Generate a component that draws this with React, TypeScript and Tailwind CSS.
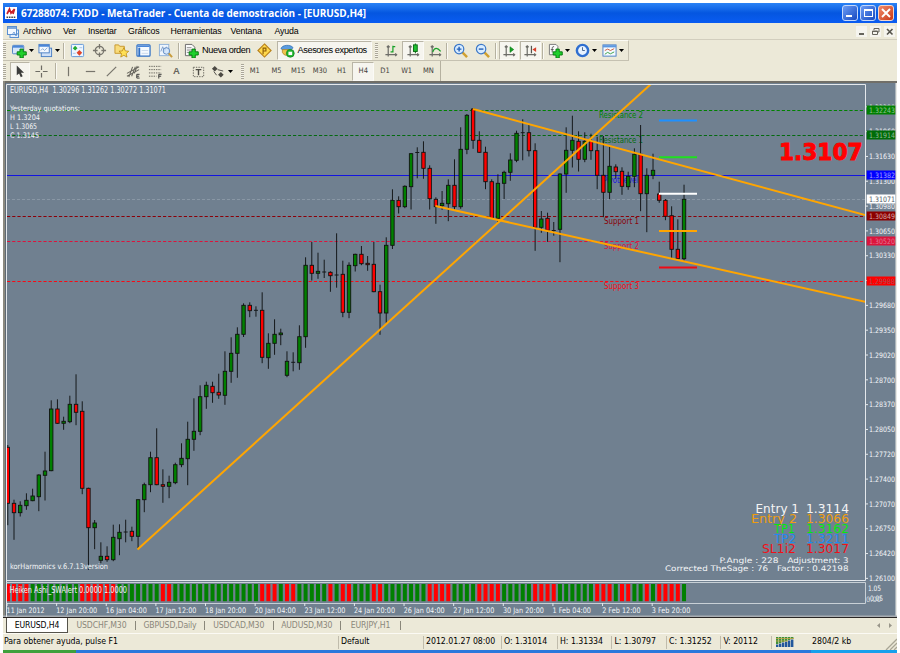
import type { ReactNode } from 'react';
import clsx from 'clsx';

type Dir = 'u' | 'd' | 'n';
// high, body top, body bottom, low, direction
type Candle = [number, number, number, number, Dir];

const CANDLES: Candle[] = [
  [445, 447.3, 503.3, 524.7, 'd'],
  [499.7, 503.3, 512.7, 539.3, 'd'],
  [501.3, 505.3, 512.7, 516, 'u'],
  [493.3, 500.3, 505.7, 509.3, 'u'],
  [488.7, 496, 500.7, 500.7, 'u'],
  [474.3, 475, 496.7, 510.7, 'u'],
  [451.7, 471, 475.3, 500, 'u'],
  [400.3, 409, 470.7, 470.7, 'u'],
  [399.3, 409, 423.3, 423.3, 'd'],
  [416.7, 421.3, 423.3, 429.3, 'u'],
  [395.7, 404.3, 421.7, 422.7, 'u'],
  [374.3, 404.3, 412.3, 424.7, 'd'],
  [401.3, 411.3, 488.3, 493.7, 'd'],
  [487.7, 488.3, 527.7, 569.3, 'd'],
  [520, 523, 527.7, 548.7, 'u'],
  [542.3, 556.3, 560.3, 562.7, 'u'],
  [546.3, 556.3, 559.7, 561.3, 'd'],
  [524.7, 537.3, 559.7, 560.7, 'u'],
  [524.3, 532.3, 538.7, 554.7, 'u'],
  [519.7, 532, 532, 542.3, 'n'],
  [526.7, 531.3, 536.3, 540.7, 'd'],
  [499.7, 499.7, 536.3, 548.3, 'u'],
  [482.7, 484.7, 499.7, 511.7, 'u'],
  [451.7, 457.7, 484.7, 491.7, 'u'],
  [428.3, 457.7, 484.7, 484.7, 'd'],
  [469.3, 484.7, 486.3, 502.3, 'd'],
  [475.7, 482.3, 486.3, 497.7, 'u'],
  [462.7, 464.7, 482.7, 483.7, 'u'],
  [443.3, 458.3, 464.7, 466.7, 'u'],
  [421.7, 439.3, 458.7, 484.7, 'u'],
  [398.3, 431.3, 439.3, 450.3, 'u'],
  [385.3, 396.7, 431.3, 434.7, 'u'],
  [381.7, 385.3, 396.7, 408.3, 'u'],
  [381.7, 386.3, 392.7, 402.3, 'd'],
  [373.7, 392.3, 395, 398.3, 'd'],
  [351.3, 371.3, 395.3, 404.3, 'u'],
  [337.3, 353.3, 371.3, 382.3, 'u'],
  [327.3, 334.3, 353.3, 377.3, 'u'],
  [303.3, 305.3, 334.3, 336.5, 'u'],
  [302.3, 305.3, 310.7, 316.7, 'd'],
  [306.3, 310.3, 310.3, 316.7, 'n'],
  [292.3, 310.3, 357.3, 362.7, 'd'],
  [333.3, 343.3, 357.7, 368.3, 'u'],
  [319.3, 334.3, 343.3, 354.3, 'u'],
  [328.7, 333, 334.7, 344.7, 'u'],
  [351.3, 361.3, 375.3, 376.7, 'u'],
  [352.3, 362.3, 362.3, 371.3, 'n'],
  [325.3, 336.7, 362.7, 369.3, 'u'],
  [257.3, 265.3, 336.7, 347.3, 'u'],
  [242, 265.3, 273.3, 280, 'd'],
  [252.7, 271.3, 273.3, 278.3, 'u'],
  [259.7, 272, 272, 278, 'n'],
  [271.3, 272.3, 275.7, 291.3, 'd'],
  [233.3, 275, 275, 287.7, 'n'],
  [260.7, 274.3, 312.3, 316.7, 'd'],
  [262.3, 265.3, 312.3, 317.7, 'u'],
  [253.7, 254.3, 265.7, 271, 'u'],
  [246, 254.3, 263.7, 264.7, 'd'],
  [256, 263.3, 264.7, 270.3, 'd'],
  [242, 264.3, 291.7, 291.7, 'd'],
  [284.7, 291.7, 313, 334.3, 'd'],
  [237.3, 245.3, 313, 322.3, 'u'],
  [189.3, 200.3, 245.3, 248.5, 'u'],
  [196.3, 200.3, 206.7, 213, 'd'],
  [185.3, 186.3, 206.7, 207.7, 'u'],
  [153.3, 153.7, 186.7, 209, 'u'],
  [147.3, 152.5, 152.5, 178.3, 'n'],
  [141.3, 152.3, 168.3, 178.3, 'd'],
  [165.3, 168.3, 198.7, 209, 'd'],
  [197.3, 199.3, 206.7, 223.3, 'd'],
  [191, 203.3, 205.7, 209.3, 'u'],
  [179.3, 185.3, 203.7, 220.7, 'u'],
  [159.3, 185.3, 206.7, 209.3, 'd'],
  [127.3, 149.3, 206.7, 208.3, 'u'],
  [114, 115.3, 149.3, 153.7, 'u'],
  [108.3, 109, 140.3, 148.3, 'd'],
  [131.3, 140.3, 152.3, 152.3, 'd'],
  [146.7, 152.3, 181.7, 188.7, 'd'],
  [179.3, 181.7, 218.3, 218.3, 'd'],
  [174.3, 183.3, 218.3, 222.3, 'u'],
  [170.7, 172.3, 183.3, 198.7, 'u'],
  [153.3, 160, 172.3, 180.3, 'u'],
  [130.7, 133.3, 160.3, 161.7, 'u'],
  [119.3, 132.7, 132.7, 160.3, 'n'],
  [125, 132.7, 150.7, 156, 'd'],
  [143.3, 150.7, 227.3, 250.3, 'd'],
  [211, 219, 227.3, 232.3, 'u'],
  [212.7, 218.3, 230.3, 241.3, 'd'],
  [222, 230.5, 230.5, 235.7, 'n'],
  [173.3, 174, 229.3, 261.7, 'u'],
  [127.3, 150.3, 174, 192.3, 'u'],
  [115.7, 140.3, 150.3, 167, 'u'],
  [131.3, 141.3, 159.3, 171, 'd'],
  [132.3, 141.3, 159.3, 161.7, 'u'],
  [133.7, 141.3, 150.7, 159.3, 'd'],
  [136.7, 150.7, 175.3, 188.7, 'd'],
  [136, 175.3, 192.3, 216.7, 'd'],
  [146, 166.3, 192.3, 198.7, 'u'],
  [164.3, 167, 171.7, 178, 'd'],
  [167.3, 171.3, 186.3, 194.3, 'd'],
  [171.7, 176.3, 186.7, 189.3, 'u'],
  [148.3, 154.3, 176.3, 186.7, 'u'],
  [125, 154.3, 193.7, 210.7, 'd'],
  [168.3, 175.3, 193.7, 231.7, 'u'],
  [153.7, 170.3, 175.3, 178.7, 'u'],
  [181.7, 194, 200.3, 202.3, 'd'],
  [199, 200.3, 216.3, 219.7, 'd'],
  [206.3, 215.7, 249.3, 258.3, 'd'],
  [219.3, 249.3, 258.7, 259.3, 'd'],
  [184.7, 199.3, 258.7, 260, 'u'],
];

// run lengths, starting with a red run
const HEIKEN_RUNS = [4, 8, 6, 7, 2, 14, 3, 1, 2, 5, 1, 1, 2, 3, 2, 7, 4, 4, 4, 5, 4, 6, 3, 1, 2, 2, 1, 1, 4, 1];
const HEIKEN = HEIKEN_RUNS.flatMap((n, i) => Array<string>(n).fill(i % 2 === 0 ? '#ff0000' : '#008000'));

const PRICES = [
  '1.32290', '1.31960', '1.31630', '1.31300', '1.30980', '1.30650', '1.30330', '1.30000', '1.29680', '1.29350',
  '1.29020', '1.28700', '1.28370', '1.28050', '1.27720', '1.27400', '1.27070', '1.26750', '1.26420', '1.26100',
];

const TIMES = [
  '11 Jan 2012', '12 Jan 20:00', '16 Jan 04:00', '17 Jan 12:00', '18 Jan 20:00', '20 Jan 04:00', '23 Jan 12:00',
  '24 Jan 20:00', '26 Jan 04:00', '27 Jan 12:00', '30 Jan 20:00', '1 Feb 04:00', '2 Feb 12:00', '3 Feb 20:00',
];

const LEVELS = [
  { y: 110.5, color: '#008200', price: '1.32243', tag: '#008000', text: '#8fc08f', label: 'Resistance 2', lx: 599, lw: 44 },
  { y: 135.5, color: '#046a10', price: '1.31914', tag: '#006c08', text: '#8fb894', label: 'Resistance 1', lx: 599, lw: 44 },
  { y: 175.5, color: '#1414e0', price: '1.31382', tag: '#0000ff', text: '#a5a5ff', label: 'Pivot level', lx: 603, lw: 35, solid: true },
  { y: 216.5, color: '#8b0008', price: '1.30849', tag: '#8b0000', text: '#d8a8a8', label: 'Support 1', lx: 604, lw: 35 },
  { y: 241.5, color: '#dc143c', price: '1.30520', tag: '#dc143c', text: '#e07a92', label: 'Support 2', lx: 604, lw: 35 },
  { y: 281.5, color: '#f80a14', price: '1.29988', tag: '#ff0000', text: '#a85058', label: 'Support 3', lx: 604, lw: 35 },
];

const TARGETS = [
  { y: 120.5, color: '#1e90ff' },
  { y: 157.2, color: '#1fe01f' },
  { y: 193.8, color: '#ffffff' },
  { y: 231, color: '#ffa500' },
  { y: 267.6, color: '#f00a14' },
];

const ENTRIES = [
  { label: 'Entry 1', value: '1.3114', x: 755.5, w: 43.5, y: 513, color: '#f5f5f5' },
  { label: 'Entry 2', value: '1.3066', x: 751, w: 46, y: 523, color: '#ee9d10' },
  { label: 'TP1', value: '1.3162', x: 774, w: 21, y: 533, color: '#05e810' },
  { label: 'TP2', value: '1.3211', x: 774, w: 22, y: 543, color: '#2389ee' },
  { label: 'SL1i2', value: '1.3017', x: 762, w: 34, y: 553, color: '#f01018' },
];

interface LabelProps {
  x: number;
  y: number;
  w?: number;
  size?: number;
  fill?: string;
  wide?: boolean;
  bold?: boolean;
  children: string;
}

function Label({ x, y, w, size = 8, fill = '#f4f6f8', wide, bold, children }: LabelProps) {
  return (
    <text
      x={x}
      y={y}
      fontSize={size}
      fill={fill}
      stroke={bold ? fill : undefined}
      strokeWidth={bold ? 0.9 : undefined}
      fontWeight={bold ? 700 : 400}
      textLength={w}
      lengthAdjust="spacingAndGlyphs"
      xmlSpace="preserve"
      className={wide ? "font-['DejaVu_Sans',sans-serif]" : "font-['DejaVu_Sans_Condensed','DejaVu_Sans',sans-serif]"}
    >
      {children}
    </text>
  );
}

function Chart() {
  const cx = (i: number) => 7.8 + i * 6.204;
  return (
    <svg viewBox="3 81 894 537" width="894" height="537" className="block shrink-0">
      <defs>
        <clipPath id="plot">
          <rect x="7" y="85" width="858" height="495" />
        </clipPath>
      </defs>
      <rect x="3" y="81" width="894" height="537" fill="#708090" />
      <rect x="3" y="81" width="894" height="2" fill="#716f68" />
      <rect x="3" y="81" width="2" height="536" fill="#8b8980" />
      <rect x="5" y="83" width="1" height="533" fill="#5f6a74" />
      <rect x="895.5" y="83" width="1.5" height="534" fill="#e8e8e4" />
      <rect x="3" y="615.5" width="894" height="1.5" fill="#a8adb2" />
      <rect x="3" y="617" width="894" height="1" fill="#2a2624" />

      <g stroke="#e4e8ec" strokeWidth="1" fill="none">
        <path d="M6.5 617V84.5H865.5V580.5H6.5" />
        <path d="M6.5 582.5H865.5V603.5H6.5" stroke="#c8d0d6" />
      </g>

      <g clipPath="url(#plot)">
        <path d="M7 199.5H865" stroke="#8997a5" strokeDasharray="3 2" />
        {LEVELS.map((l) => (
          <path key={l.price} d={`M7 ${l.y}H865`} stroke={l.color} strokeWidth="1.1" strokeDasharray={l.solid ? undefined : '3.2 2'} />
        ))}
        {LEVELS.map((l) => (
          <Label key={l.label} x={l.lx} y={l.y + 7.8} w={l.lw} fill={l.color} wide>
            {l.label}
          </Label>
        ))}
        {CANDLES.map(([hi, top, bot, lo, dir], i) => {
          const x = cx(i);
          if (dir === 'n') {
            return <path key={i} d={`M${x} ${hi}V${lo}M${x - 2} ${top}H${x + 2}`} stroke="#15181a" />;
          }
          return (
            <g key={i}>
              <path d={`M${x} ${hi}V${lo + 0.5}`} stroke="#15181a" />
              <rect
                x={x - 1.7}
                y={top}
                width="3.4"
                height={Math.max(bot - top, 1)}
                fill={dir === 'u' ? '#008000' : '#ff0000'}
                stroke="#10120f"
                strokeWidth="0.9"
              />
            </g>
          );
        })}
        {TARGETS.map((t) => (
          <path key={t.y} d={`M659 ${t.y}H697`} stroke={t.color} strokeWidth="2" />
        ))}
        <g stroke="#ffa500" strokeWidth="2">
          <path d="M137.5 549.5L651 84" />
          <path d="M473 109L866 215.3" />
          <path d="M435.5 206L866 302" />
        </g>
      </g>

      <Label x={10} y={93.2} w={156}>EURUSD,H4  1.30296 1.31262 1.30272 1.31071</Label>
      <Label x={10} y={110.5} w={70} size={7.6} wide>Yesterday quotations:</Label>
      <Label x={10} y={120} w={30} size={7.6} wide>H 1.3204</Label>
      <Label x={10} y={129} w={27} size={7.6} wide>L 1.3065</Label>
      <Label x={10} y={138} w={29} size={7.6} wide>C 1.3145</Label>
      <Label x={10} y={569} w={98} size={7.6} wide>korHarmonics v.6.7.13version</Label>
      <Label x={779} y={160} w={83.5} size={23} fill="#ff0000" bold wide>1.3107</Label>

      {ENTRIES.map((e) => (
        <g key={e.label}>
          <Label x={e.x} y={e.y} w={e.w} size={13} fill={e.color} wide>{e.label}</Label>
          <Label x={806} y={e.y} w={43} size={13} fill={e.color} wide>{e.value}</Label>
        </g>
      ))}
      <Label x={719.5} y={563} w={59} size={7.6} wide>P.Angle : 228</Label>
      <Label x={787.5} y={563} w={61} size={7.6} wide>Adjustment: 3</Label>
      <Label x={665} y={571} w={103} size={7.6} wide>Corrected TheSage : 76</Label>
      <Label x={777} y={571} w={71.5} size={7.6} wide>Factor : 0.42198</Label>

      {PRICES.map((p, i) => {
        const y = 106.8 + i * 24.82;
        return (
          <g key={p}>
            <path d={`M865 ${y}H868`} stroke="#e4e8ec" />
            <Label x={869} y={y + 2.7} w={26} size={7.4}>{p}</Label>
          </g>
        );
      })}
      {LEVELS.map((l) => (
        <g key={l.price}>
          <rect x="866.7" y={l.y - 5} width="28.6" height="9" fill={l.tag} />
          <Label x={869} y={l.y + 2.2} w={26} size={7.4} fill={l.text}>{l.price}</Label>
        </g>
      ))}
      <rect x="866.7" y="194.5" width="28.6" height="9" fill="#ffffff" />
      <Label x={869} y={201.8} w={26} size={7.4} fill="#555d66">1.31071</Label>

      {HEIKEN.map((c, i) => (
        <rect key={i} x={Math.max(7, cx(i) - 2)} y="584" width={i === 0 ? 3 : 4} height="17.2" fill={c} />
      ))}
      <Label x={9.5} y={592.8} w={117.5}>Heiken Ashi_SWAlert 0.0000 1.0000</Label>
      <Label x={868} y={590.5} w={13} size={7.4}>1.05</Label>
      <Label x={868} y={600.6} w={15} size={7.4}>-0.05</Label>
      <Label x={866} y={602} w={15} size={7.4} fill="#d5dbe0">0.00</Label>
      {TIMES.map((t, i) => (
        <g key={t}>
          <path d={`M${7 + i * 49.63} 603V606`} stroke="#e4e8ec" />
          <Label x={6.6 + i * 49.63} y={613} w={i === 0 ? 38 : i > 10 ? 38.5 : 41} size={7.6}>{t}</Label>
        </g>
      ))}
    </svg>
  );
}

function Icon({ children, className }: { children: ReactNode; className?: string }) {
  return (
    <svg viewBox="0 0 16 16" className={clsx('shrink-0 w-[15px] h-[15px]', className)} fill="none">
      {children}
    </svg>
  );
}

const Caret = () => (
  <svg viewBox="0 0 5 3" className="w-[5px] h-[3px] shrink-0">
    <path d="M0 0h5L2.5 3z" fill="#000" />
  </svg>
);

const Sep = ({ className }: { className?: string }) => (
  <span className={clsx('w-px h-4 bg-[#b5b1a0] border-r border-[#fbfaf4] box-content shrink-0', className)} />
);

const Grip = () => (
  <span className="w-[3px] h-[15px] shrink-0 bg-[repeating-linear-gradient(180deg,#aaa698_0_1px,#f6f4ea_1px_2px)]" />
);

function Btn({ children, active, className }: { children: ReactNode; active?: boolean; className?: string }) {
  return (
    <button
      className={clsx(
        'flex items-center justify-center shrink-0 h-[19px] gap-[2px]',
        active && 'bg-[#f6f5ef] border border-[#b9b5a6] border-r-[#fbfaf6] border-b-[#fbfaf6]',
        className ?? 'w-[22px]'
      )}
    >
      {children}
    </button>
  );
}

const Plus = () => (
  <path d="M8.500 6.500h3.500v2.900h3.200v3.400H12V16H8.500v-3.200H5.500V9.400h3z" fill="#1fd02c" stroke="#087a10" />
);

const Axes = () => <path d="M4.500 3v11.500M1.500 12.500h12M3 4.500L4.500 3 6 4.500M12 11l1.500 1.500L12 14" stroke="#6d6d68" strokeWidth="1.300" />;

function MainToolbar() {
  return (
    <div className="flex items-center h-[21px] w-[626px] border-b border-r border-t border-t-[#fbfaf4] border-[#c5c1b1]">
      <Grip />
      <div className="w-[5px]" />
      <Btn className="w-[24px]">
        <Icon>
          <rect x=".5" y="2.5" width="12" height="9" rx="1" fill="#d5e6fa" stroke="#4a7fc4" />
          <path d="M1 4h11" stroke="#4a86d8" strokeWidth="2" />
          <Plus />
        </Icon>
        <Caret />
      </Btn>
      <Btn className="w-[27px]">
        <Icon>
          <rect x="3.5" y="5.5" width="11" height="9" fill="#cfe0f6" stroke="#4a7fc4" />
          <rect x="1" y="1.5" width="11" height="9" fill="#f4f9ff" stroke="#4a7fc4" />
          <path d="M1 3h11" stroke="#4a86d8" strokeWidth="2" />
          <path d="M3 8l2-2 2 2 3-3" stroke="#88a8d0" />
        </Icon>
        <Caret />
      </Btn>
      <Sep className="ml-px" />
      <Btn className="w-[22px] ml-px">
        <Icon>
          <rect x="1.5" y="1.5" width="13" height="13" rx="1" fill="#eef6ff" stroke="#5d95d8" />
          <path d="M5.500 3l2.500 2.500L5.500 8 3 5.500z" fill="#1ea82e" />
          <path d="M10 7.500l3 3-3 3-3-3z" fill="#e0452a" />
          <path d="M10 5h3M3 11h3" stroke="#a8c4e4" />
        </Icon>
      </Btn>
      <Btn>
        <Icon>
          <circle cx="8" cy="8" r="4.5" stroke="#77756c" strokeWidth="1.4" />
          <path d="M8 1v5M8 10v5M1 8h5M10 8h5" stroke="#77756c" strokeWidth="1.4" />
        </Icon>
      </Btn>
      <Btn>
        <Icon>
          <path d="M1 2h4l1 1.5h5V11H1z" fill="#f8dc7c" stroke="#c8962c" />
          <path d="M10.5 5l1.6 3.4 3.6.4-2.7 2.5.8 3.7-3.3-1.9-3.3 1.9.8-3.7-2.7-2.5 3.6-.4z" fill="#ffe055" stroke="#b8860b" strokeWidth=".8" />
        </Icon>
      </Btn>
      <Btn>
        <Icon>
          <rect x="1" y="2" width="14" height="12" rx="1" fill="#f5faff" stroke="#2f6fc4" strokeWidth="1.3" />
          <path d="M1.5 3.5h13" stroke="#4a86d8" strokeWidth="1.6" />
          <path d="M3.500 5v9" stroke="#2f6fc4" strokeWidth="2" />
          <path d="M6 8h7M6 11h7" stroke="#c8d8ec" />
        </Icon>
      </Btn>
      <Btn>
        <Icon>
          <rect x="1.5" y="1.5" width="10" height="12" fill="#eef5fd" stroke="#8fb0d8" />
          <path d="M3 9l2-5 2 5 2-5" stroke="#7c9cc8" />
          <circle cx="9" cy="8.5" r="3.5" fill="#cfe4fa" fillOpacity=".8" stroke="#5d88c0" />
          <path d="M11.5 11l3.5 4" stroke="#c89c3c" strokeWidth="2.2" />
        </Icon>
      </Btn>
      <Sep className="ml-[2px]" />
      <Btn className="w-[71px] ml-[2px] pl-px">
        <Icon>
          <path d="M1.500 1.500h7l3 3v9h-10z" fill="#fafafa" stroke="#666" />
          <path d="M3 5h5M3 7.500h6M3 10h3" stroke="#888" />
          <Plus />
        </Icon>
        <span className="w-[50px] whitespace-nowrap text-[9.200px] tracking-[-0.400px] ml-px text-left">Nueva orden</span>
      </Btn>
      <Btn className="w-[22px]">
        <Icon>
          <path d="M8 1L15 8 8 15 1 8z" fill="#ffd84a" stroke="#b8801a" strokeWidth="1.200" />
          <path d="M6.500 12V5.500h3v3h-3" stroke="#8c5c08" strokeWidth="1.200" />
        </Icon>
      </Btn>
      <Btn active className="w-[95px] ml-[2px]">
        <Icon>
          <path d="M1 6c1-4 10-5 13-1l-3 3H4z" fill="#5a9be0" stroke="#2b66a8" strokeWidth=".7" />
          <path d="M2.500 7h8v4c-2 3-6 3-8-1z" fill="#f0c44c" stroke="#a87818" strokeWidth=".7" />
          <circle cx="11" cy="11" r="4.200" fill="#1fb52d" stroke="#0b7a18" strokeWidth=".7" />
          <path d="M9 9.300h4v3.600H9z" fill="#fff" />
        </Icon>
        <span className="w-[72px] whitespace-nowrap text-[9.200px] tracking-[-0.400px] ml-px text-left">Asesores expertos</span>
      </Btn>
      <div className="w-[3px]" />
      <Grip />
      <Btn className="w-[22px] ml-[2px]">
        <Icon>
          <Axes />
          <path d="M9.500 3v7M9.500 3.800H12M7 9.500h2.500" stroke="#18a028" strokeWidth="1.300" />
        </Icon>
      </Btn>
      <Btn active>
        <Icon>
          <Axes />
          <path d="M10 .5v10.500" stroke="#0a6a14" />
          <rect x="8" y="2" width="4" height="7" fill="#1fc030" stroke="#0a6a14" />
        </Icon>
      </Btn>
      <Btn>
        <Icon>
          <Axes />
          <path d="M5 9.500c2-5 5-5 8.500-.5" stroke="#18a028" strokeWidth="1.300" />
        </Icon>
      </Btn>
      <Sep />
      <Btn className="w-[22px] ml-px">
        <Icon>
          <path d="M9.500 9.500L15 15" stroke="#d0a030" strokeWidth="2.600" />
          <circle cx="6.500" cy="6.500" r="5" fill="#d8ecff" stroke="#3c78c8" strokeWidth="1.300" />
          <path d="M4 6.500h5M6.500 4v5" stroke="#2460b8" strokeWidth="1.500" />
        </Icon>
      </Btn>
      <Btn>
        <Icon>
          <path d="M9.500 9.500L15 15" stroke="#d0a030" strokeWidth="2.600" />
          <circle cx="6.500" cy="6.500" r="5" fill="#d8ecff" stroke="#3c78c8" strokeWidth="1.300" />
          <path d="M4 6.500h5" stroke="#2460b8" strokeWidth="1.500" />
        </Icon>
      </Btn>
      <Sep className="ml-[2px]" />
      <Btn active className="w-[20px] ml-[2px]">
        <Icon>
          <Axes />
          <path d="M8.500 4v6l4-3z" fill="#18a028" stroke="#0a7a18" strokeWidth=".6" />
        </Icon>
      </Btn>
      <Btn active className="w-[21px] ml-px">
        <Icon>
          <Axes />
          <path d="M9 3v8" stroke="#55554f" strokeWidth="1.300" />
          <path d="M14 4.500v5L10 7z" fill="#d8402a" />
        </Icon>
      </Btn>
      <Sep className="ml-px" />
      <Btn className="w-[26px] ml-[2px]">
        <Icon>
          <path d="M1.500 1.500h7l2 2v9h-9z" fill="#fafafa" stroke="#777" />
          <path d="M6.500 4c-2-.5-2 1-2 2v4M3 7h3" stroke="#555" />
          <Plus />
        </Icon>
        <Caret />
      </Btn>
      <Btn className="w-[27px]">
        <Icon>
          <circle cx="8" cy="8" r="6" fill="#e8f3ff" stroke="#2f6fd0" strokeWidth="2.600" />
          <path d="M8 4.500V8h2.500" stroke="#44608c" />
        </Icon>
        <Caret />
      </Btn>
      <Btn className="w-[27px]">
        <Icon>
          <rect x="1" y="2" width="14" height="12" fill="#f5faff" stroke="#4a7fc4" />
          <path d="M1 3.500h14" stroke="#5d98e0" strokeWidth="2.400" />
          <path d="M3 8l3-1.500L9 8l4-2" stroke="#c85a3a" />
          <path d="M3 12l3-2 3 1.500 4-2" stroke="#38a048" />
        </Icon>
        <Caret />
      </Btn>
    </div>
  );
}

const PERIODS = ['M1', 'M5', 'M15', 'M30', 'H1', 'H4', 'D1', 'W1', 'MN'];

function DrawToolbar() {
  return (
    <div className="flex items-center h-[20px] w-[438px] border-r border-[#b5b1a0]">
      <Grip />
      <Btn active className="w-[20px] ml-[4px]">
        <Icon>
          <path d="M4 1.500v10.500l2.500-2 1.800 4 2-1L8.500 9.200h3.300z" fill="#3c3c3c" />
        </Icon>
      </Btn>
      <Btn>
        <Icon>
          <path d="M8 1.500v5M8 9.500v5M1.500 8h5M9.500 8h5" stroke="#6e6c64" strokeWidth="1.300" />
        </Icon>
      </Btn>
      <Sep className="ml-[3px]" />
      <Btn className="w-[22px]">
        <Icon><path d="M8 3v10" stroke="#77756c" strokeWidth="1.300" /></Icon>
      </Btn>
      <Btn>
        <Icon><path d="M3 8h10" stroke="#77756c" strokeWidth="1.300" /></Icon>
      </Btn>
      <Btn className="w-[21px]">
        <Icon><path d="M3 13L13 3" stroke="#77756c" strokeWidth="1.300" /></Icon>
      </Btn>
      <Btn>
        <Icon>
          <path d="M1 10L14 3M1 13l13-7M3 14L7 3M6 13l4-10M9 10l3-8" stroke="#66645c" strokeWidth="1.100" />
          <path d="M14.500 11h-3v4h3M11.500 13h2.500" stroke="#333" />
        </Icon>
      </Btn>
      <Btn>
        <Icon>
          <path d="M1 2.500h13M1 6h13M1 9.500h13M1 13h8" stroke="#66645c" strokeDasharray="1.500 1" />
          <path d="M14.500 11h-3v4.500M11.500 13h2.500" stroke="#333" />
        </Icon>
      </Btn>
      <Btn className="w-[21px] pt-px"><span className="text-[9.500px] font-bold text-[#66645c]">A</span></Btn>
      <Btn>
        <Icon>
          <rect x="2.500" y="3.500" width="11" height="10" stroke="#66645c" strokeDasharray="1.500 1.200" />
          <path d="M5 6h6M8 6v6" stroke="#4c4a44" strokeWidth="1.500" />
        </Icon>
      </Btn>
      <Btn className="w-[26px]">
        <Icon>
          <path d="M4 2l3 3-3 3-3-3zM10.500 8.500l3 3-3 3-3-3z" fill="#4c4a44" />
          <path d="M7 6l6 1.500M3 8l3 4" stroke="#4c4a44" />
        </Icon>
        <Caret />
      </Btn>
      <div className="w-[6px]" />
      <Grip />
      <div className="flex">
        {PERIODS.map((p) => (
          <Btn key={p} active={p === 'H4'} className="w-[21.700px]">
            <span className="text-[7.500px] text-[#45433d] font-['DejaVu_Sans_Condensed','DejaVu_Sans',sans-serif]">{p}</span>
          </Btn>
        ))}
      </div>
    </div>
  );
}

function TitleBar() {
  return (
    <header className="flex items-center h-[20px] bg-linear-to-b from-[#2a82f5] via-[#0556e0] to-[#0a5cf2] text-white pl-[2px] pr-[3px]">
      <svg viewBox="0 0 12 12" className="w-[12px] h-[12px] shrink-0">
        <rect width="12" height="12" fill="#fff" />
        <path d="M2 7l2.500-5L6 6l3.500-4L8 7" stroke="#c8202a" strokeWidth="1.700" fill="none" />
        <path d="M1.500 10.200h9" stroke="#444" strokeWidth="1.600" strokeDasharray="1.600 .8" />
      </svg>
      <h1 className="ml-[4px] text-[10px] font-bold whitespace-nowrap tracking-[-0.040px] font-['Open_Sans',sans-serif]">
        67288074: FXDD - MetaTrader - Cuenta de demostración - [EURUSD,H4]
      </h1>
      <div className="flex gap-[2px] ml-auto">
        <span className="size-[16px] rounded-[3px] border border-[#c5d8fa] bg-linear-to-br from-[#6c9cf5] to-[#1848c0] flex items-end pl-[3px] pb-[3px]">
          <span className="w-[6px] h-[2px] bg-white" />
        </span>
        <span className="size-[16px] rounded-[3px] border border-[#c5d8fa] bg-linear-to-br from-[#6c9cf5] to-[#1848c0] flex items-center justify-center">
          <span className="w-[9px] h-[8px] border border-t-2 border-white" />
        </span>
        <span className="size-[16px] rounded-[3px] border border-[#f5d5c8] bg-linear-to-br from-[#f08a68] to-[#c83410] flex items-center justify-center">
          <svg viewBox="0 0 10 10" className="size-[10px]">
            <path d="M1 1l8 8M9 1L1 9" stroke="#fff" strokeWidth="1.900" />
          </svg>
        </span>
      </div>
    </header>
  );
}

const MENU = [
  { label: 'Archivo', cls: 'w-[40px]' },
  { label: 'Ver', cls: 'w-[25px]' },
  { label: 'Insertar', cls: 'w-[40px]' },
  { label: 'Gráficos', cls: 'w-[42.500px]' },
  { label: 'Herramientas', cls: 'w-[60px]' },
  { label: 'Ventana', cls: 'w-[44px]' },
  { label: 'Ayuda', cls: 'w-[30px]' },
];

function MenuBar() {
  return (
    <nav className="flex items-center h-[17px] pl-[4px] pr-[2px] pt-px border-b border-[#d2cebe] text-[8.800px] tracking-[-0.150px]">
      <svg viewBox="0 0 12 12" className="size-[12px] shrink-0 mr-[4px]" fill="none">
        <rect x="3" y="4" width="8.500" height="7.500" fill="#e4effc" stroke="#5a8fd0" />
        <rect x=".5" y=".5" width="9" height="8" fill="#f4f9ff" stroke="#5a8fd0" />
        <path d="M1 2h8" stroke="#5a8fd0" strokeWidth="1.500" />
        <path d="M5 9l2-3 2 4 2-3" stroke="#5a8fd0" strokeWidth=".8" />
      </svg>
      {MENU.map((m) => (
        <span key={m.label} className={clsx('whitespace-nowrap shrink-0', m.cls)}>{m.label}</span>
      ))}
      <div className="flex gap-[3px] ml-auto text-[#55534b]">
        <span className="size-[11px] bg-[#f5f4ee] flex items-end justify-center pb-[2px]">
          <span className="w-[5px] h-[2px] bg-[#66645c]" />
        </span>
        <span className="size-[11px] bg-[#f5f4ee]">
          <svg viewBox="0 0 11 11" className="size-[11px]" fill="none" stroke="#66645c">
            <path d="M4 4V2.500h5V6H7.500M2.500 5h5v3.500h-5zM4 2.500h5M2.500 5.500h5" />
          </svg>
        </span>
        <span className="size-[11px] bg-[#f5f4ee]">
          <svg viewBox="0 0 11 11" className="size-[11px]" stroke="#55534b" strokeWidth="1.600">
            <path d="M3 3l5.500 5.500M8.500 3L3 8.500" />
          </svg>
        </span>
      </div>
    </nav>
  );
}

const TABS = [
  { label: 'USDCHF,M30', cls: 'w-[68px]' },
  { label: 'GBPUSD,Daily', cls: 'w-[69px]' },
  { label: 'USDCAD,M30', cls: 'w-[68.500px]' },
  { label: 'AUDUSD,M30', cls: 'w-[67.500px]' },
  { label: 'EURJPY,H1', cls: 'w-[60px]' },
];

function ChartTabs() {
  return (
    <div className="flex h-[15px] text-[8.600px] pl-[3px] font-['DejaVu_Sans_Condensed','DejaVu_Sans',sans-serif] tracking-[-0.120px]">
      <span className="w-[62px] bg-white border border-t-0 border-[#55534b] flex items-center justify-center">EURUSD,H4</span>
      <div className="flex items-center text-[#8a877a]">
        {TABS.map((t) => (
          <span key={t.label} className={clsx('flex items-center justify-center h-[9px] border-r border-[#8a877a] whitespace-nowrap', t.cls)}>
            {t.label}
          </span>
        ))}
      </div>
      <div className="flex items-center gap-[9px] ml-auto mr-[5px]">
        <svg viewBox="0 0 3 5" className="w-[3px] h-[5px]"><path d="M3 0v5L0 2.500z" fill="#99968a" /></svg>
        <svg viewBox="0 0 3 5" className="w-[3px] h-[5px]"><path d="M0 0v5l3-2.500z" fill="#99968a" /></svg>
      </div>
    </div>
  );
}

const STATUS = [
  { text: 'Default', cls: 'w-[85px]' },
  { text: '2012.01.27 08:00', cls: 'w-[78px]' },
  { text: 'O: 1.31014', cls: 'w-[56px]' },
  { text: 'H: 1.31334', cls: 'w-[54.500px]' },
  { text: 'L: 1.30797', cls: 'w-[54.500px]' },
  { text: 'C: 1.31252', cls: 'w-[54.500px]' },
  { text: 'V: 20112', cls: 'w-[51px]' },
];

function StatusBar() {
  return (
    <footer className="flex items-center h-[17px] border-t border-[#fbfaf4] text-[8.700px] tracking-[-0.030px] font-['DejaVu_Sans_Condensed','DejaVu_Sans',sans-serif] pl-px">
      <span className="w-[333.500px] whitespace-nowrap">Para obtener ayuda, pulse F1</span>
      {STATUS.map((s) => (
        <span key={s.text} className={clsx('flex items-center h-[13px] border-l border-[#c0bcac] pl-[2.500px] whitespace-nowrap shrink-0', s.cls)}>
          {s.text}
        </span>
      ))}
      <span className="flex items-center h-[13px] border-l border-[#c0bcac] pl-[4px]">
        <svg viewBox="0 0 18 10" className="w-[18px] h-[10px]">
          {[0, 1, 2, 3, 4, 5].map((i) => (
            <g key={i}>
              <rect x={i * 3} y="0" width="2.400" height={7 - i} fill="#3f8f3a" />
              <rect x={i * 3} y={7.500 - i} width="2.400" height={2.500 + i} fill="#23589c" />
            </g>
          ))}
          <path d="M0 1.500h18M0 4h12" stroke="#c8a848" strokeWidth=".8" />
        </svg>
      </span>
      <span className="ml-[18px]">2804/2 kb</span>
      <svg viewBox="0 0 12 12" className="size-[12px] ml-auto self-end">
        <path d="M1 12L12 1M5 12l7-7M9 12l3-3" stroke="#a8a595" strokeWidth="1.300" />
      </svg>
    </footer>
  );
}

export default function App() {
  return (
    <div className="w-[900px] h-[653px] bg-white overflow-hidden pt-[3px] px-[3px] font-['Liberation_Sans',Arial,sans-serif] text-black">
      <div className="flex flex-col h-[650px] bg-[#ece9d8]">
        <TitleBar />
        <MenuBar />
        <MainToolbar />
        <DrawToolbar />
        <Chart />
        <ChartTabs />
        <StatusBar />
        <div className="flex h-[3px] shrink-0 bg-[#2a78dc]">
          <span className="w-[73px] bg-[#3fa03c]" />
          <span className="w-[86px] ml-auto bg-[#18a0ec]" />
        </div>
      </div>
    </div>
  );
}
